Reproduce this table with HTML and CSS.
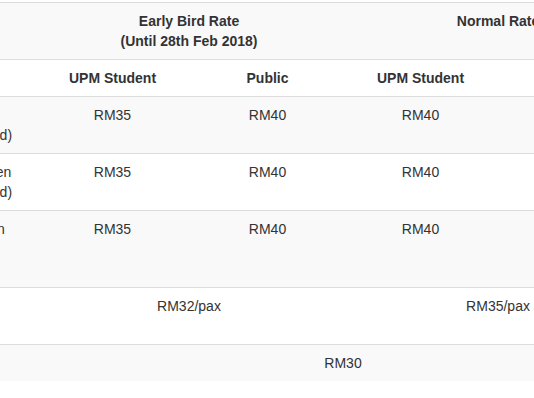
FILE: index.html
```html
<!DOCTYPE html>
<html lang="en">
<head>
<meta charset="utf-8">
<title>Registration Fees</title>
<link rel="stylesheet" href="styles.css">
</head>
<body>
<div class="table-wrap">
  <table class="fees">
    <colgroup>
      <col class="col-label">
      <col class="col-a">
      <col class="col-b">
      <col class="col-c">
      <col class="col-d">
    </colgroup>
    <thead>
      <tr>
        <th class="label">Category</th>
        <th colspan="2">Early Bird Rate<br>(Until 28th Feb 2018)</th>
        <th colspan="2">Normal Rate</th>
      </tr>
      <tr>
        <th class="label"></th>
        <th>UPM Student</th>
        <th>Public</th>
        <th>UPM Student</th>
        <th>Public</th>
      </tr>
    </thead>
    <tbody>
      <tr>
        <td class="label">Adult<br>(Lunch provided)</td>
        <td>RM35</td>
        <td>RM40</td>
        <td>RM40</td>
        <td>RM45</td>
      </tr>
      <tr>
        <td class="label">Primary Children<br>(Lunch provided)</td>
        <td>RM35</td>
        <td>RM40</td>
        <td>RM40</td>
        <td>RM45</td>
      </tr>
      <tr>
        <td class="label">Staff &amp; Children<br>Family Pack<br>(4 pax)</td>
        <td>RM35</td>
        <td>RM40</td>
        <td>RM40</td>
        <td>RM45</td>
      </tr>
      <tr>
        <td class="label">Group Rate<br>(Min. 10 pax)</td>
        <td colspan="2">RM32/pax</td>
        <td colspan="2">RM35/pax</td>
      </tr>
      <tr>
        <td class="label">Kids Run</td>
        <td colspan="4">RM30</td>
      </tr>
    </tbody>
  </table>
</div>
</body>
</html>
```

FILE: styles.css
```css
html, body {
  margin: 0;
  padding: 0;
  background: #fff;
}

body {
  font-family: "Liberation Sans", Arial, sans-serif;
  font-size: 14px;
  line-height: 20px;
  color: #333;
  overflow: hidden;
}

.table-wrap {
  overflow: hidden;
  padding-top: 2px;
}

.fees {
  border-collapse: collapse;
  border-spacing: 0;
  table-layout: fixed;
  width: 753px;
  margin-left: -101px;
}

.col-label { width: 135px; }
.col-a { width: 157px; }
.col-b { width: 153px; }
.col-c { width: 153px; }
.col-d { width: 155px; }

.fees th,
.fees td {
  padding: 8px;
  border-top: 1px solid #ddd;
  vertical-align: top;
  text-align: center;
  white-space: nowrap;
}

.fees th {
  font-weight: bold;
}

.fees .label {
  text-align: left;
}

.fees thead tr:nth-child(odd),
.fees tbody tr:nth-child(odd) {
  background: #f9f9f9;
}
```
